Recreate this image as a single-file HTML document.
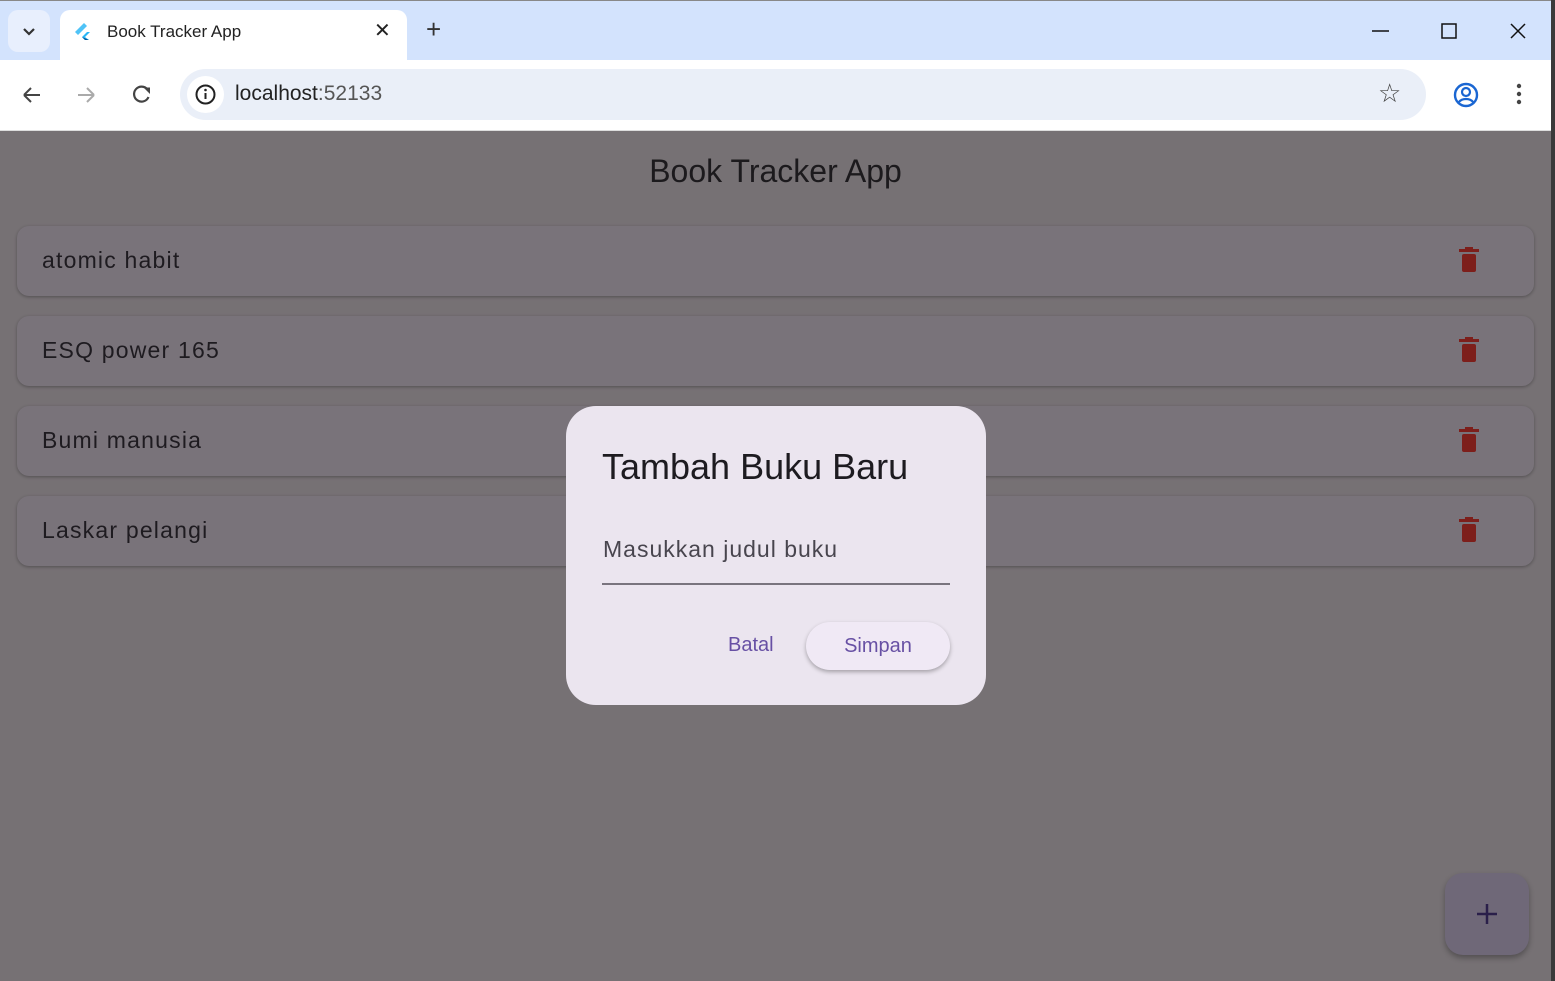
<!DOCTYPE html>
<html><head><style>
*{margin:0;padding:0;box-sizing:border-box}
body{width:1555px;height:981px;overflow:hidden;background:#3a3a3a;font-family:"Liberation Sans",sans-serif;position:relative}
.win{position:absolute;left:0;top:0;width:1551px;height:981px;background:#767174}
.tabbar{position:absolute;left:0;top:0;width:1551px;height:60px;background:#d3e3fd;border-top:1px solid #888}
.tabbtn{position:absolute;left:8px;top:9px;width:42px;height:42px;border-radius:10px;background:#e8effd}
.tab{position:absolute;left:60px;top:9px;width:347px;height:51px;background:#fff;border-radius:10px 10px 0 0}
.toolbar{position:absolute;left:0;top:60px;width:1551px;height:71px;background:#fff;border-bottom:1px solid #ddd}
.omni{position:absolute;left:180px;top:9px;width:1246px;height:51px;border-radius:26px;background:#eaeff8}
.info{position:absolute;left:7px;top:7px;width:37px;height:37px;border-radius:50%;background:#fff}
.t{position:absolute;white-space:nowrap}
.card{position:absolute;left:17px;width:1517px;height:70px;border-radius:12px;background:#79737a;box-shadow:0 1px 3px rgba(0,0,0,.3)}
.card span{position:absolute;left:25px;top:21px;font-size:23px;color:#1e1b20;letter-spacing:1.2px}
.card svg{position:absolute;left:1440px;top:20px}
</style></head><body>
<div class="win">
<div class="tabbar">
 <div class="tabbtn"><svg width="42" height="42"><path d="M16 19l5 5 5-5" stroke="#333" stroke-width="2.2" fill="none"/></svg></div>
 <div class="tab">
  <svg style="position:absolute;left:14px;top:12px" width="18" height="20"><path d="M10 1L1 10l3 3L13 4z" fill="#4fc3f7"/><path d="M13 10l-5 5 3 3h4l-4-3 5-5z" fill="#29b6f6"/><path d="M8 15l3 3h4z" fill="#01579b"/></svg>
  <div class="t" style="left:47px;top:12px;font-size:17px;color:#222">Book Tracker App</div>
  <div class="t" style="left:314px;top:8px;font-size:20px;color:#222">✕</div>
 </div>
 <div class="t" style="left:426px;top:13px;font-size:26px;color:#333">+</div>
 <svg style="position:absolute;left:1372px;top:22px" width="160" height="20"><path d="M0 8h17" stroke="#111" stroke-width="1.5"/><rect x="70" y="1" width="14" height="14" stroke="#111" stroke-width="1.5" fill="none"/><path d="M139 1l14 14M153 1l-14 14" stroke="#111" stroke-width="1.5"/></svg>
</div>
<div class="toolbar">
 <svg style="position:absolute;left:20px;top:23px" width="140" height="24"><path d="M4 12h16M4 12l7-7M4 12l7 7" stroke="#444" stroke-width="2" fill="none"/><path d="M58 12h16M74 12l-7-7M74 12l-7 7" stroke="#aaa" stroke-width="2" fill="none"/><path d="M127.5 6.5A7.5 7.5 0 1 0 128.5 14" stroke="#444" stroke-width="2.2" fill="none"/><path d="M123.5 4.5h6.5v6.5z" fill="#444"/></svg>
 <div class="omni"><div class="info"><svg width="37" height="37"><circle cx="18.5" cy="18.5" r="9" stroke="#222" stroke-width="2" fill="none"/><path d="M18.5 17v6" stroke="#222" stroke-width="2"/><circle cx="18.5" cy="14" r="1.3" fill="#222"/></svg></div>
  <div class="t" style="left:55px;top:13px;font-size:21px;color:#222">localhost<span style="color:#555">:52133</span></div>
  <div class="t" style="left:1198px;top:9px;font-size:26px;color:#444">☆</div>
 </div>
 <svg style="position:absolute;left:1452px;top:21px" width="28" height="28"><circle cx="14" cy="14" r="11" stroke="#1a66d2" stroke-width="2.4" fill="none"/><circle cx="14" cy="11" r="4" stroke="#1a66d2" stroke-width="2.2" fill="none"/><path d="M7 21c3-4 11-4 14 0" stroke="#1a66d2" stroke-width="2.2" fill="none"/></svg>
 <svg style="position:absolute;left:1514px;top:23px" width="10" height="26"><circle cx="5" cy="3" r="2.2" fill="#444"/><circle cx="5" cy="11" r="2.2" fill="#444"/><circle cx="5" cy="19" r="2.2" fill="#444"/></svg>
</div>
<div class="t" style="left:0;width:1551px;text-align:center;top:153px;font-size:32px;color:#1c1a1d">Book Tracker App</div>
<div class="card" style="top:226px"><span>atomic habit</span><svg width="24" height="28"><rect x="5" y="8" width="14" height="18" rx="2" fill="#7d1f1b"/><rect x="2" y="3" width="20" height="3" fill="#7d1f1b"/><rect x="8" y="1" width="8" height="3" fill="#7d1f1b"/></svg></div>
<div class="card" style="top:316px"><span>ESQ power 165</span><svg width="24" height="28"><rect x="5" y="8" width="14" height="18" rx="2" fill="#7d1f1b"/><rect x="2" y="3" width="20" height="3" fill="#7d1f1b"/><rect x="8" y="1" width="8" height="3" fill="#7d1f1b"/></svg></div>
<div class="card" style="top:406px"><span>Bumi manusia</span><svg width="24" height="28"><rect x="5" y="8" width="14" height="18" rx="2" fill="#7d1f1b"/><rect x="2" y="3" width="20" height="3" fill="#7d1f1b"/><rect x="8" y="1" width="8" height="3" fill="#7d1f1b"/></svg></div>
<div class="card" style="top:496px"><span>Laskar pelangi</span><svg width="24" height="28"><rect x="5" y="8" width="14" height="18" rx="2" fill="#7d1f1b"/><rect x="2" y="3" width="20" height="3" fill="#7d1f1b"/><rect x="8" y="1" width="8" height="3" fill="#7d1f1b"/></svg></div>
<div style="position:absolute;left:1445px;top:873px;width:84px;height:82px;border-radius:18px;background:#6f6878;box-shadow:0 3px 6px rgba(0,0,0,.3)"><svg width="84" height="82"><path d="M42 31v20M32 41h20" stroke="#2a1f4a" stroke-width="2.5"/></svg></div>
<div style="position:absolute;left:566px;top:406px;width:420px;height:299px;border-radius:30px;background:#ebe5ef">
 <div class="t" style="left:36px;top:40px;font-size:36px;color:#1d1b20">Tambah Buku Baru</div>
 <div class="t" style="left:37px;top:130px;font-size:23px;color:#48454e;letter-spacing:1px">Masukkan judul buku</div>
 <div style="position:absolute;left:36px;top:177px;width:348px;height:2px;background:#79747e"></div>
 <div class="t" style="left:162px;top:228px;font-size:20px;color:#6750a4">Batal</div>
 <div style="position:absolute;left:240px;top:216px;width:144px;height:48px;border-radius:24px;background:#f0e9f5;box-shadow:0 2px 4px rgba(0,0,0,.3)"><div class="t" style="left:0;width:144px;text-align:center;top:13px;font-size:20px;color:#6750a4">Simpan</div></div>
</div>
</div>
</body></html>
